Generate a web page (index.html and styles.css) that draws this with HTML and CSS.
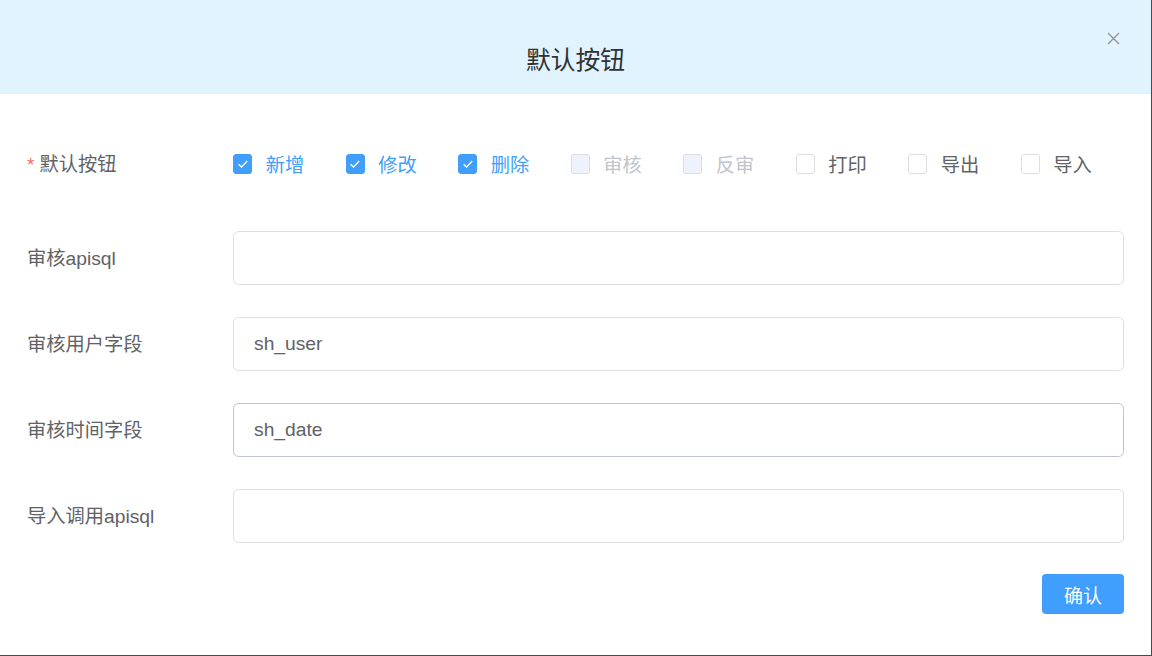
FILE: index.html
```html
<!DOCTYPE html>
<html lang="zh-CN">
<head>
<meta charset="utf-8">
<title>默认按钮</title>
<link rel="stylesheet" href="styles.css">
</head>
<body>
<div class="dialog">
  <div class="dialog-header">
    <span class="dialog-title">默认按钮</span>
    <span class="dialog-close" aria-label="关闭">
      <svg width="13" height="13" viewBox="0 0 13 13"><path d="M1 1 L12 12 M12 1 L1 12" stroke="#909399" stroke-width="1.3" fill="none"/></svg>
    </span>
  </div>
  <div class="dialog-body">
    <div class="form-row form-row--checks">
      <div class="form-label"><span class="required">*</span>默认按钮</div>
      <div class="form-content check-group">
        <label class="check is-checked"><span class="check-box"><svg width="14" height="14" viewBox="0 0 14 14"><path d="M2.6 7.2 L5.6 10 L11.2 4" stroke="#fff" stroke-width="1.3" fill="none"/></svg></span><span class="check-text">新增</span></label>
        <label class="check is-checked"><span class="check-box"><svg width="14" height="14" viewBox="0 0 14 14"><path d="M2.6 7.2 L5.6 10 L11.2 4" stroke="#fff" stroke-width="1.3" fill="none"/></svg></span><span class="check-text">修改</span></label>
        <label class="check is-checked"><span class="check-box"><svg width="14" height="14" viewBox="0 0 14 14"><path d="M2.6 7.2 L5.6 10 L11.2 4" stroke="#fff" stroke-width="1.3" fill="none"/></svg></span><span class="check-text">删除</span></label>
        <label class="check is-disabled"><span class="check-box"></span><span class="check-text">审核</span></label>
        <label class="check is-disabled"><span class="check-box"></span><span class="check-text">反审</span></label>
        <label class="check"><span class="check-box"></span><span class="check-text">打印</span></label>
        <label class="check"><span class="check-box"></span><span class="check-text">导出</span></label>
        <label class="check"><span class="check-box"></span><span class="check-text">导入</span></label>
      </div>
    </div>
    <div class="form-row">
      <div class="form-label">审核apisql</div>
      <div class="form-content"><div class="input"></div></div>
    </div>
    <div class="form-row">
      <div class="form-label">审核用户字段</div>
      <div class="form-content"><div class="input">sh_user</div></div>
    </div>
    <div class="form-row">
      <div class="form-label">审核时间字段</div>
      <div class="form-content"><div class="input input--hover">sh_date</div></div>
    </div>
    <div class="form-row">
      <div class="form-label">导入调用apisql</div>
      <div class="form-content"><div class="input"></div></div>
    </div>
    <div class="dialog-footer">
      <button class="btn-primary">确认</button>
    </div>
  </div>
</div>
</body>
</html>
```
FILE: styles.css
```css
* { box-sizing: border-box; }
html, body { margin: 0; padding: 0; }
body {
  background: #4a4a4a;
  width: 1152px;
  height: 656px;
  overflow: hidden;
  font-family: "Liberation Sans", "Noto Sans CJK SC", sans-serif;
}
.dialog {
  width: 1151px;
  height: 655px;
  background: #fff;
  display: flex;
  flex-direction: column;
}
.dialog-header {
  position: relative;
  height: 94px;
  background: #e1f3fe;
  padding-top: 43px;
  text-align: center;
}
.dialog-title {
  font-size: 24.75px;
  line-height: 30px;
  color: #303133;
  font-family: "Noto Sans CJK SC", sans-serif;
}
.dialog-close {
  position: absolute;
  top: 32px;
  right: 31px;
  width: 13px;
  height: 13px;
  display: block;
  line-height: 0;
}
.dialog-body {
  padding: 43px 27px 0 27px;
}
.form-row {
  display: flex;
  align-items: center;
  height: 54px;
  margin-bottom: 32px;
}
.form-row--checks {
  margin-bottom: 40px;
}
.form-label {
  width: 206px;
  flex: none;
  font-size: 19.25px;
  color: #606266;
  padding-bottom: 3px;
  white-space: nowrap;
  font-family: "Liberation Sans", "Noto Sans CJK SC", sans-serif;
}
.required {
  color: #f56c6c;
  margin-right: 5px;
  font-size: 19px;
}
.form-content {
  flex: 1;
  min-width: 0;
}
.check-group {
  display: flex;
  align-items: center;
}
.check {
  display: flex;
  align-items: center;
  flex: none;
  white-space: nowrap;
  margin-right: 41.25px;
  font-size: 19.25px;
  color: #606266;
  font-family: "Noto Sans CJK SC", sans-serif;
}
.check-box {
  width: 19.25px;
  height: 19.25px;
  border: 1px solid #dcdfe6;
  border-radius: 3px;
  background: #fff;
  display: flex;
  align-items: center;
  justify-content: center;
  flex: none;
}
.check-text {
  padding-left: 13.5px;
  line-height: 20px;
}
.check.is-checked .check-box {
  background: #409eff;
  border-color: #409eff;
}
.check.is-checked .check-text { color: #409eff; }
.check.is-disabled .check-box {
  background: #edf2fc;
  border-color: #dcdfe6;
}
.check.is-disabled .check-text { color: #c0c4cc; }
.input {
  height: 54px;
  border: 1px solid #dcdfe6;
  border-radius: 5.5px;
  padding: 0 20px;
  display: flex;
  align-items: center;
  font-size: 19.25px;
  color: #606266;
}
.input--hover { border-color: #c0c4cc; }
.dialog-footer {
  display: flex;
  justify-content: flex-end;
  margin-top: -1px;
}
.btn-primary {
  width: 82px;
  height: 40px;
  border: none;
  border-radius: 4px;
  background: #409eff;
  color: #fff;
  font-size: 19px;
  font-family: "Noto Sans CJK SC", sans-serif;
  padding: 0;
}
```
